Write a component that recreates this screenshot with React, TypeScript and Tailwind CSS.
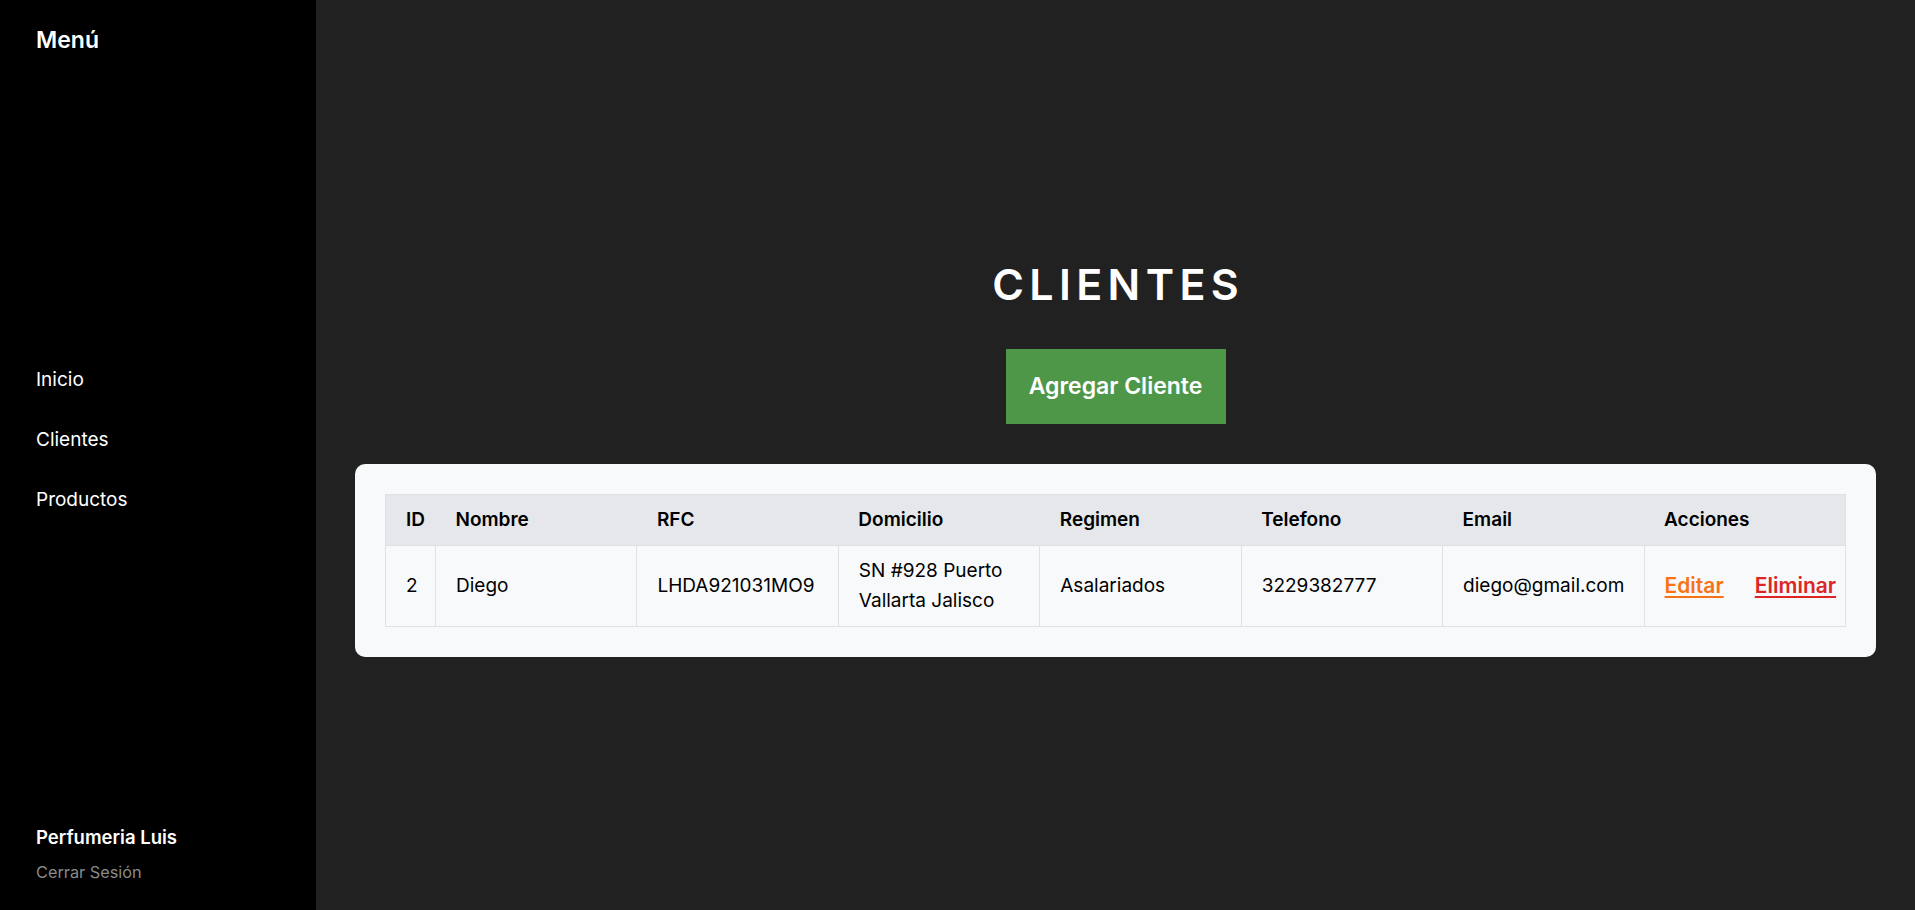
const clientes = [
  {
    id: 2,
    nombre: 'Diego',
    rfc: 'LHDA921031MO9',
    domicilio: 'SN #928 Puerto Vallarta Jalisco',
    regimen: 'Asalariados',
    telefono: '3229382777',
    email: 'diego@gmail.com',
  },
];

const font = { fontFamily: 'Inter, "Noto Sans", sans-serif' };

export default function App() {
  return (
    <div className="flex h-screen w-full bg-[#212121] text-white" style={font}>
      {/* Sidebar */}
      <aside className="flex h-full w-[316px] shrink-0 flex-col justify-between bg-black px-[36px] pt-[24px] pb-[26px]">
        <h2 className="text-[23px] leading-[32px] font-semibold">Menú</h2>

        <nav className="flex flex-col gap-[32px] text-[19px] leading-[28px]">
          <a href="#" className="hover:text-gray-300">Inicio</a>
          <a href="#" className="hover:text-gray-300">Clientes</a>
          <a href="#" className="hover:text-gray-300">Productos</a>
        </nav>

        <div className="flex flex-col gap-[10px]">
          <p className="text-[18.5px] leading-[26px] font-semibold">Perfumeria Luis</p>
          <button className="text-left text-[16.3px] leading-[24px] text-[#8a8a8a]">Cerrar Sesión</button>
        </div>
      </aside>

      {/* Main */}
      <main className="flex flex-1 flex-col items-center justify-center px-[39px] pt-[6px]">
        <h1 className="text-[43px] leading-[50px] font-semibold tracking-[0.125em] pl-[0.125em]">CLIENTES</h1>

        <button className="mt-[40px] h-[75px] w-[220px] bg-[#4f9748] text-[23px] font-semibold text-white">
          Agregar Cliente
        </button>

        <div className="mt-[40px] w-full rounded-[10px] bg-[#f8f9fa] p-[30px]">
          <table className="w-full table-fixed border-collapse text-[19px] text-black">
            <colgroup>
              <col className="w-[50px]" />
              <col />
              <col />
              <col />
              <col />
              <col />
              <col />
              <col />
            </colgroup>
            <thead>
              <tr className="border border-[#dee2e6] bg-[#e5e7eb] text-left">
                {['ID', 'Nombre', 'RFC', 'Domicilio', 'Regimen', 'Telefono', 'Email', 'Acciones'].map((h) => (
                  <th key={h} className="px-[20px] py-[10px] leading-[30px] font-semibold">
                    {h}
                  </th>
                ))}
              </tr>
            </thead>
            <tbody>
              {clientes.map((c) => (
                <tr key={c.id} className="bg-[#f8f9fa]">
                  <td className="border border-[#dee2e6] px-[20px] py-[10px] leading-[30px]">{c.id}</td>
                  <td className="border border-[#dee2e6] px-[20px] py-[10px] leading-[30px]">{c.nombre}</td>
                  <td className="border border-[#dee2e6] px-[20px] py-[10px] leading-[30px]">{c.rfc}</td>
                  <td className="border border-[#dee2e6] px-[20px] py-[10px] leading-[30px]">{c.domicilio}</td>
                  <td className="border border-[#dee2e6] px-[20px] py-[10px] leading-[30px]">{c.regimen}</td>
                  <td className="border border-[#dee2e6] px-[20px] py-[10px] leading-[30px]">{c.telefono}</td>
                  <td className="border border-[#dee2e6] px-[20px] py-[10px] leading-[30px]">{c.email}</td>
                  <td className="border border-[#dee2e6] px-[20px] py-[10px] leading-[30px] whitespace-nowrap">
                    <a href="#" className="mr-[31px] text-[21px] font-semibold text-[#f97316] underline underline-offset-[3px]">
                      Editar
                    </a>
                    <a href="#" className="text-[21px] font-semibold text-[#dc2626] underline underline-offset-[3px]">
                      Eliminar
                    </a>
                  </td>
                </tr>
              ))}
            </tbody>
          </table>
        </div>
      </main>
    </div>
  );
}
